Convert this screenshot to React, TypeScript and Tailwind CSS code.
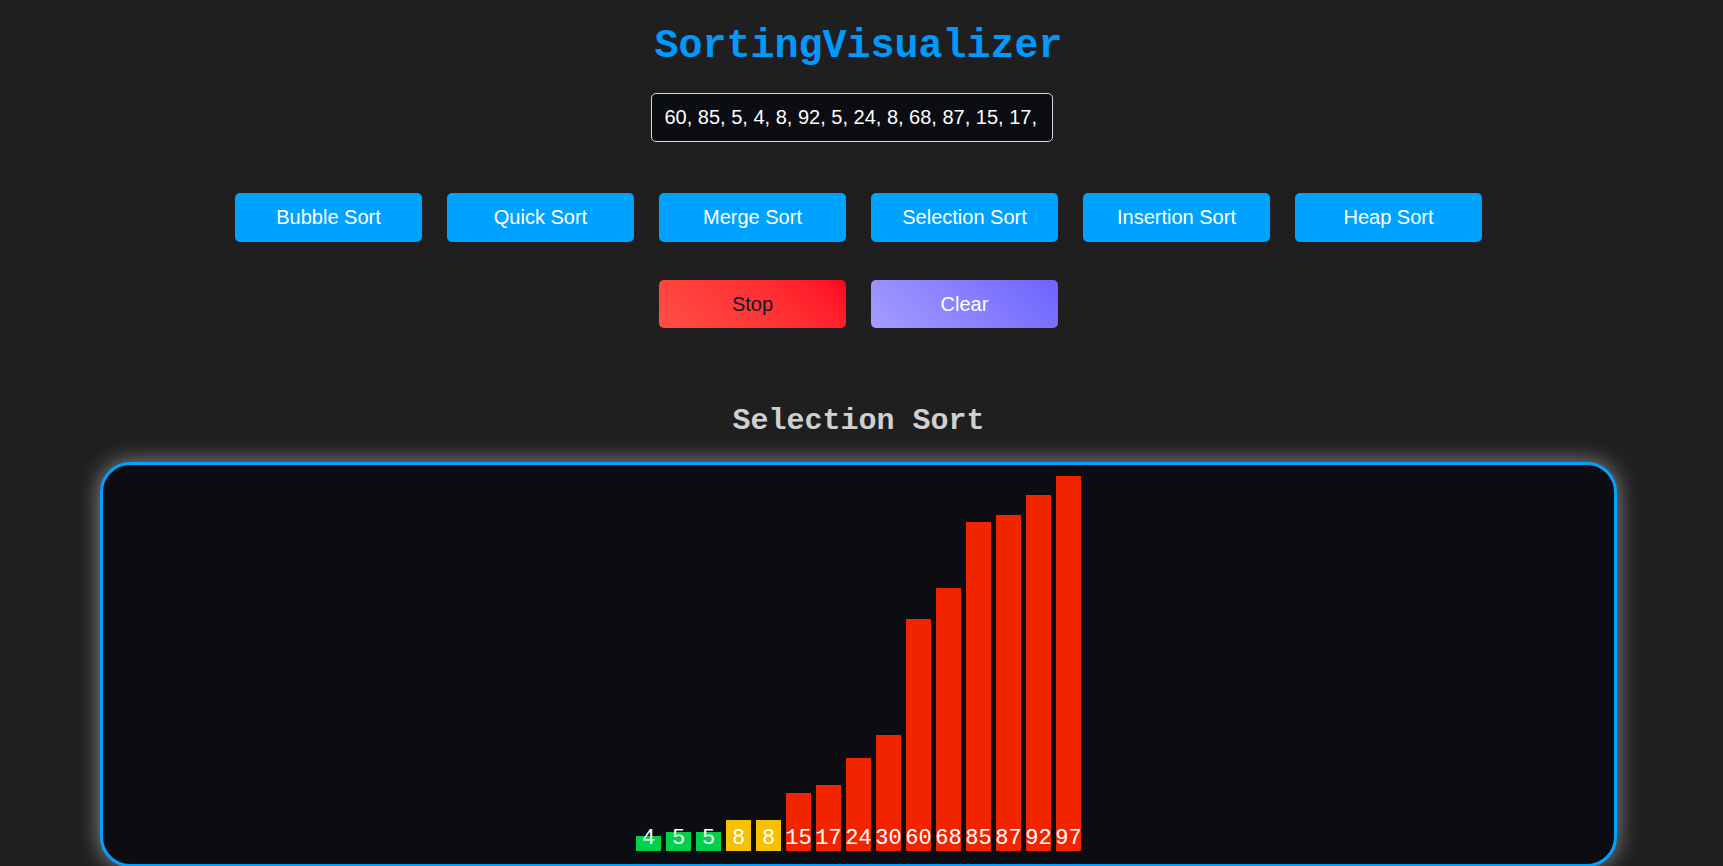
import { useState } from 'react';

type Bar = { value: number; state: 'sorted' | 'compare' | 'idle' };

const algorithms = ['Bubble Sort', 'Quick Sort', 'Merge Sort', 'Selection Sort', 'Insertion Sort', 'Heap Sort'];

const initialBars: Bar[] = [
    { value: 4, state: 'sorted' },
    { value: 5, state: 'sorted' },
    { value: 5, state: 'sorted' },
    { value: 8, state: 'compare' },
    { value: 8, state: 'compare' },
    { value: 15, state: 'idle' },
    { value: 17, state: 'idle' },
    { value: 24, state: 'idle' },
    { value: 30, state: 'idle' },
    { value: 60, state: 'idle' },
    { value: 68, state: 'idle' },
    { value: 85, state: 'idle' },
    { value: 87, state: 'idle' },
    { value: 92, state: 'idle' },
    { value: 97, state: 'idle' },
];

const barColor = {
    sorted: 'bg-[#00d14b]',
    compare: 'bg-[#f7c100]',
    idle: 'bg-[#f22400]',
};

function App() {
    const [input, setInput] = useState('60, 85, 5, 4, 8, 92, 5, 24, 8, 68, 87, 15, 17, 30, 97');
    const [current, setCurrent] = useState('Selection Sort');
    const [bars] = useState(initialBars);

    const max = Math.max(...bars.map((b) => b.value));

    return (
        <div className="w-full h-[866px] overflow-hidden bg-[#1f1f1f]">
            <div className="w-[1717px] flex flex-col items-center">
                <h1 className="mt-[24px] text-[40px] leading-[45px] font-bold text-[#0099ff] font-['Liberation_Mono',monospace]">
                    SortingVisualizer
                </h1>

                <input
                    className="mt-[24px] mr-[14px] w-[402px] h-[49px] px-[13px] bg-[#0b0d12] border border-[#d8d8d8] rounded-[5px] text-white text-[20px] font-['Liberation_Sans',Arial,sans-serif] outline-none"
                    value={input}
                    onChange={(e) => setInput(e.target.value)}
                />

                <div className="mt-[51px] flex gap-[25px]">
                    {algorithms.map((name) => (
                        <button
                            key={name}
                            onClick={() => setCurrent(name)}
                            className="w-[187px] h-[49px] pb-[2px] rounded-[5px] bg-[#00a2ff] text-white text-[20px] font-['Liberation_Sans',Arial,sans-serif]"
                        >
                            {name}
                        </button>
                    ))}
                </div>

                <div className="mt-[38px] flex gap-[25px]">
                    <button className="w-[187px] h-[48px] rounded-[5px] bg-linear-45 from-[#ff4d45] to-[#ff0022] text-[#16162a] text-[20px] font-['Liberation_Sans',Arial,sans-serif]">
                        Stop
                    </button>
                    <button className="w-[187px] h-[48px] rounded-[5px] bg-linear-45 from-[#a69cff] to-[#6f62ff] text-white text-[20px] font-['Liberation_Sans',Arial,sans-serif]">
                        Clear
                    </button>
                </div>

                <h2 className="mt-[76px] text-[30px] leading-[34px] font-bold text-[#d0d0d0] font-['Liberation_Mono',monospace]">
                    {current}
                </h2>

                <div className="mt-[24px] w-[1517px] h-[405px] shrink-0 rounded-[30px] border-[3px] border-[#00a2ff] bg-[#0b0d12] shadow-[0_0_22px_rgba(255,255,255,0.5)] flex items-end justify-center gap-[5px] pb-[13px]">
                    {bars.map((bar, i) => (
                        <div
                            key={i}
                            className={`w-[25px] flex flex-col justify-end items-center ${barColor[bar.state]}`}
                            style={{ height: `${Math.round((bar.value / max) * 375)}px` }}
                        >
                            <span className="text-white text-[22px] leading-[24px] font-['Liberation_Mono',monospace] whitespace-nowrap">
                                {bar.value}
                            </span>
                        </div>
                    ))}
                </div>
            </div>
        </div>
    );
}

export default App;
